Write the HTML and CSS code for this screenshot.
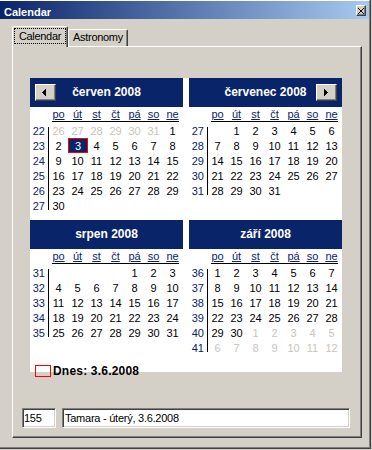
FILE: index.html
```html
<!DOCTYPE html>
<html lang="cs">
<head>
<meta charset="utf-8">
<title>Calendar</title>
<link rel="stylesheet" href="styles.css">
</head>
<body>
<div class="window">
  <div class="frame">
    <div class="titlebar">
      <span class="ttext">Calendar</span>
      <span class="close"><svg width="6" height="6" viewBox="0 0 6 6" shape-rendering="crispEdges"><rect x="0" y="0" width="1" height="1"/><rect x="5" y="0" width="1" height="1"/><rect x="1" y="1" width="1" height="1"/><rect x="4" y="1" width="1" height="1"/><rect x="2" y="2" width="2" height="2"/><rect x="1" y="4" width="1" height="1"/><rect x="4" y="4" width="1" height="1"/><rect x="0" y="5" width="1" height="1"/><rect x="5" y="5" width="1" height="1"/></svg></span>
    </div>
    <div class="client">
      <div class="tabs">
        <div class="tab tab-sel"><span class="focus">Calendar</span></div>
        <div class="tab tab-off">Astronomy</div>
      </div>
      <div class="panel">
        <div class="cal">
          <!-- June -->
          <section class="month">
            <div class="mhead">
              <span class="slot"><span class="navbtn navbtn-prev"><svg width="4" height="7" viewBox="0 0 4 7" shape-rendering="crispEdges"><rect x="3" y="0" width="1" height="7"/><rect x="2" y="1" width="1" height="5"/><rect x="1" y="2" width="1" height="3"/><rect x="0" y="3" width="1" height="1"/></svg></span></span>
              <h2 class="mtitle">červen 2008</h2>
              <span class="slot"></span>
            </div>
            <div class="dnames"><span>po</span><span>út</span><span>st</span><span>čt</span><span>pá</span><span>so</span><span>ne</span></div>
            <div class="mbody">
              <div class="weeks"><span class="wk">22</span><span class="wk">23</span><span class="wk">24</span><span class="wk">25</span><span class="wk">26</span><span class="wk">27</span></div>
              <div class="days">
                <span class="o">26</span><span class="o">27</span><span class="o">28</span><span class="o">29</span><span class="o">30</span><span class="o">31</span><span>1</span>
                <span>2</span><span class="sel">3</span><span>4</span><span>5</span><span>6</span><span>7</span><span>8</span>
                <span>9</span><span>10</span><span>11</span><span>12</span><span>13</span><span>14</span><span>15</span>
                <span>16</span><span>17</span><span>18</span><span>19</span><span>20</span><span>21</span><span>22</span>
                <span>23</span><span>24</span><span>25</span><span>26</span><span>27</span><span>28</span><span>29</span>
                <span>30</span>
              </div>
            </div>
          </section>
          <!-- July -->
          <section class="month">
            <div class="mhead">
              <span class="slot"></span>
              <h2 class="mtitle">červenec 2008</h2>
              <span class="slot slot-end"><span class="navbtn navbtn-next"><svg width="4" height="7" viewBox="0 0 4 7" shape-rendering="crispEdges"><rect x="0" y="0" width="1" height="7"/><rect x="1" y="1" width="1" height="5"/><rect x="2" y="2" width="1" height="3"/><rect x="3" y="3" width="1" height="1"/></svg></span></span>
            </div>
            <div class="dnames"><span>po</span><span>út</span><span>st</span><span>čt</span><span>pá</span><span>so</span><span>ne</span></div>
            <div class="mbody">
              <div class="weeks"><span class="wk">27</span><span class="wk">28</span><span class="wk">29</span><span class="wk">30</span><span class="wk">31</span></div>
              <div class="days">
                <span></span><span>1</span><span>2</span><span>3</span><span>4</span><span>5</span><span>6</span>
                <span>7</span><span>8</span><span>9</span><span>10</span><span>11</span><span>12</span><span>13</span>
                <span>14</span><span>15</span><span>16</span><span>17</span><span>18</span><span>19</span><span>20</span>
                <span>21</span><span>22</span><span>23</span><span>24</span><span>25</span><span>26</span><span>27</span>
                <span>28</span><span>29</span><span>30</span><span>31</span>
              </div>
            </div>
          </section>
          <!-- August -->
          <section class="month">
            <div class="mhead">
              <span class="slot"></span>
              <h2 class="mtitle">srpen 2008</h2>
              <span class="slot"></span>
            </div>
            <div class="dnames"><span>po</span><span>út</span><span>st</span><span>čt</span><span>pá</span><span>so</span><span>ne</span></div>
            <div class="mbody">
              <div class="weeks"><span class="wk">31</span><span class="wk">32</span><span class="wk">33</span><span class="wk">34</span><span class="wk">35</span></div>
              <div class="days">
                <span></span><span></span><span></span><span></span><span>1</span><span>2</span><span>3</span>
                <span>4</span><span>5</span><span>6</span><span>7</span><span>8</span><span>9</span><span>10</span>
                <span>11</span><span>12</span><span>13</span><span>14</span><span>15</span><span>16</span><span>17</span>
                <span>18</span><span>19</span><span>20</span><span>21</span><span>22</span><span>23</span><span>24</span>
                <span>25</span><span>26</span><span>27</span><span>28</span><span>29</span><span>30</span><span>31</span>
              </div>
            </div>
          </section>
          <!-- September -->
          <section class="month">
            <div class="mhead">
              <span class="slot"></span>
              <h2 class="mtitle">září 2008</h2>
              <span class="slot"></span>
            </div>
            <div class="dnames"><span>po</span><span>út</span><span>st</span><span>čt</span><span>pá</span><span>so</span><span>ne</span></div>
            <div class="mbody">
              <div class="weeks"><span class="wk">36</span><span class="wk">37</span><span class="wk">38</span><span class="wk">39</span><span class="wk">40</span><span class="wk">41</span></div>
              <div class="days">
                <span>1</span><span>2</span><span>3</span><span>4</span><span>5</span><span>6</span><span>7</span>
                <span>8</span><span>9</span><span>10</span><span>11</span><span>12</span><span>13</span><span>14</span>
                <span>15</span><span>16</span><span>17</span><span>18</span><span>19</span><span>20</span><span>21</span>
                <span>22</span><span>23</span><span>24</span><span>25</span><span>26</span><span>27</span><span>28</span>
                <span>29</span><span>30</span><span class="o">1</span><span class="o">2</span><span class="o">3</span><span class="o">4</span><span class="o">5</span>
                <span class="o">6</span><span class="o">7</span><span class="o">8</span><span class="o">9</span><span class="o">10</span><span class="o">11</span><span class="o">12</span>
              </div>
            </div>
          </section>
          <div class="legend"><span class="todaybox"></span><span class="todaytext">Dnes: 3.6.2008</span></div>
        </div>
        <div class="fields">
          <div class="field field-num">155</div>
          <div class="field field-name">Tamara - úterý, 3.6.2008</div>
        </div>
      </div>
    </div>
  </div>
</div>
</body>
</html>
```
FILE: styles.css
```css
* { box-sizing: border-box; }
html, body { margin: 0; padding: 0; }
body {
  width: 372px;
  height: 450px;
  overflow: hidden;
  background: #D4D0C8;
  font-family: "Liberation Sans", Arial, sans-serif;
  font-size: 11px;
  color: #000;
}
.window {
  width: 371px;
  height: 449px;
  border-right: 1px solid #404040;
  border-bottom: 1px solid #404040;
}
.frame {
  height: 100%;
  border-top: 1px solid #fff;
  border-right: 1px solid #808080;
  border-bottom: 1px solid #808080;
  display: flex;
  flex-direction: column;
}
.titlebar {
  height: 18px;
  flex: none;
  display: flex;
  align-items: flex-start;
  padding-left: 4px;
  background: linear-gradient(to right, #0A246A, #A6CAF0);
  color: #fff;
  font-weight: bold;
  font-size: 11px;
}
.ttext { margin-top: 5px; line-height: 12px; }
.close {
  margin-left: auto;
  margin-right: 3px;
  margin-top: 4px;
  width: 10px;
  height: 11px;
  background: #D4D0C8;
  border: 1px solid;
  border-color: #fff #404040 #404040 #fff;
  box-shadow: inset -1px -1px #808080;
  display: flex;
  align-items: center;
  justify-content: center;
}
.close svg { display: block; fill: #000; margin-top: 1px; }
.client {
  flex: 1;
  display: flex;
  flex-direction: column;
  padding: 7px 7px 9px 12px;
}
.tabs {
  height: 20px;
  display: flex;
  align-items: flex-end;
  position: relative;
  z-index: 1;
  letter-spacing: -0.3px;
}
.tab {
  border-top: 1px solid #fff;
  border-left: 1px solid #fff;
  border-right: 1px solid #404040;
  border-radius: 2px 2px 0 0;
  box-shadow: inset -1px 0 #808080;
  background: #D4D0C8;
}
.tab-sel {
  width: 56px;
  height: 21px;
  margin-bottom: -1px;
  padding: 1px 0 0 1px;
}
.focus {
  display: block;
  width: 52px;
  height: 16px;
  border: 1px dotted #000;
  line-height: 14px;
  text-align: center;
}
.tab-off {
  width: 60px;
  height: 17px;
  line-height: 15px;
  text-align: center;
}
.panel {
  flex: 1;
  display: flex;
  flex-direction: column;
  border-top: 1px solid #fff;
  border-left: 1px solid #fff;
  border-right: 1px solid #404040;
  border-bottom: 1px solid #404040;
  box-shadow: inset -1px -1px #808080;
}
.cal {
  margin: 31px 0 0 17px;
  width: 312px;
  height: 294px;
  background: #fff;
  display: grid;
  grid-template-columns: 153px 153px;
  grid-template-rows: 135px 135px 17px;
  column-gap: 6px;
  row-gap: 7px;
}
.month { display: flex; flex-direction: column; }
.mhead {
  height: 29px;
  background: #0A246A;
  display: grid;
  grid-template-columns: 1fr auto 1fr;
  align-items: center;
  padding: 0 5px;
  color: #fff;
}
.slot { display: flex; }
.slot-end { justify-content: flex-end; }
.mtitle {
  margin: 0;
  font-size: 12px;
  font-weight: bold;
  line-height: 29px;
  white-space: nowrap;
}
.navbtn {
  width: 21px;
  height: 17px;
  background: #D4D0C8;
  border: 1px solid;
  border-color: #fff #404040 #404040 #fff;
  box-shadow: inset -1px -1px #808080;
  display: flex;
  align-items: flex-start;
}
.navbtn svg { display: block; fill: #000; margin-top: 4px; }
.navbtn-prev svg { margin-left: 6px; }
.navbtn-next svg { margin-left: 7px; }
.dnames {
  display: grid;
  grid-template-columns: repeat(7, 19px);
  margin-left: 19px;
  height: 15px;
  line-height: 14px;
  text-align: center;
  color: #0A246A;
  background: linear-gradient(#000, #000) no-repeat 3px 100% / 127px 1px;
}
.dnames span { text-decoration: underline; }
.mbody {
  display: flex;
  align-items: flex-start;
  height: 90px;
  margin-top: 1px;
}
.weeks {
  width: 19px;
  display: flex;
  flex-direction: column;
  padding-right: 4px;
  text-align: right;
  color: #0A246A;
  background: linear-gradient(#000, #000) no-repeat right 0 top 4px / 1px calc(100% - 7px);
}
.wk { height: 15px; line-height: 16px; }
.days {
  display: grid;
  grid-template-columns: repeat(7, 19px);
  grid-auto-rows: 15px;
}
.days span { text-align: center; line-height: 16px; }
.days .o { color: #C8C4BC; }
.days .sel {
  background: #0A246A;
  color: #fff;
  border: 1px solid #f00;
  line-height: 14px;
  margin-right: -1px;
}
.legend {
  grid-column: 1 / -1;
  display: flex;
  align-items: center;
  gap: 2px;
  padding: 3px 0 2px 5px;
  font-size: 12px;
  font-weight: bold;
  letter-spacing: 0.2px;
}
.todaybox {
  width: 16px;
  height: 12px;
  border: 1px solid #f00;
}
.todaytext { line-height: 12px; }
.fields {
  display: flex;
  gap: 6px;
  margin: 36px 0 0 9px;
}
.field {
  height: 20px;
  background: #fff;
  border: 1px solid;
  border-color: #808080 #fff #fff #808080;
  box-shadow: inset 1px 1px #404040, inset -1px -1px #D4D0C8;
  line-height: 18px;
  letter-spacing: -0.25px;
  white-space: nowrap;
}
.field-num { width: 34px; padding-left: 1px; }
.field-name { width: 288px; padding-left: 2px; }
```
